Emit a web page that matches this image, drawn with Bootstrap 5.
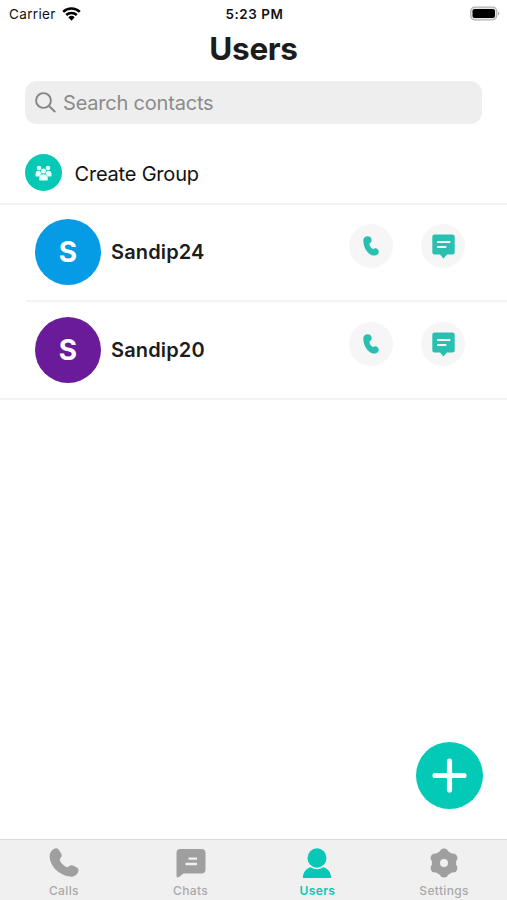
<!DOCTYPE html>
<html lang="en">
<head>
<meta charset="utf-8">
<meta name="viewport" content="width=device-width, initial-scale=1">
<title>Users</title>
<link href="https://cdn.jsdelivr.net/npm/bootstrap@5.3.0/dist/css/bootstrap.min.css" rel="stylesheet">
<style>
body{font-family:Inter,"Liberation Sans",sans-serif;color:#1c1c1c;background:#fff}
svg{display:block;flex:none}
.screen{height:900px;overflow:hidden}
.status{height:28px;font-size:13.5px;line-height:28px;color:#111;padding:0 7px 0 9px}
.carrier{letter-spacing:.35px}
.wifi{margin-left:6px}
.status .time{font-weight:600;font-size:13.4px;letter-spacing:.6px}
.title{height:53px;font-size:31.5px;line-height:42px;font-weight:700;letter-spacing:-.3px;margin:0;text-align:center}
.search{height:43px;margin:0 25px;border-radius:12px;background:#eee;color:#8b8b8b;font-size:20px;letter-spacing:-.2px;padding-left:10px}
.search span{margin-left:7px}
.create{height:81px;padding:18px 25px 0;border-bottom:2px solid #f3f3f3;font-size:20px;letter-spacing:-.2px;color:#111}
.create span{margin:2px 0 0 12.5px}
.group{width:37px;height:37px;background:#05c8b5}
.contact{height:96px;padding:0 42px 0 35px}
.rule{height:2px;background:#f3f3f3}
.rule.inset{margin-left:26px}
.rows{margin-top:-1px}
.avatar{width:66px;height:66px;font-size:28px;font-weight:700;color:#fff}
.blue{background:#069be5}.purple{background:#6a1b9a}
.who{font-size:20px;font-weight:600;letter-spacing:.15px;margin-left:10px}
.round{width:44px;height:44px;background:#f6f6f6;color:#29bfb1;border:0;padding:0;margin-bottom:12px}
.round + .round{margin-left:28px}
.fab{width:67px;height:67px;background:#03c9b7;border:0;padding:0;margin:0 24.5px 30px 0}
.tabs{height:61px;background:#f0f0f0;border-top:1px solid #dadada;color:#9f9f9f;font-size:12px;font-weight:500;letter-spacing:.35px;line-height:14px}
.tab{padding-top:8px;padding-left:1px}
.tab span{margin-top:6px;color:#a9a9a9}
.tab.on,.tab.on span{color:#07c8b7;font-weight:600}
</style>
</head>
<body>
<svg width="0" height="0" class="position-absolute">
<symbol id="phone" viewBox="0 0 30 30"><path d="M4.800 1C7-.3 8.800.3 9.900 2l2.200 3.400c1.100 1.800.8 3.400-.5 4.700-1.100 1.100-1.100 2.100-.2 3.500 1.300 2.100 2.900 3.700 5 5 1.400.9 2.400.8 3.500-.3 1.300-1.200 2.900-1.500 4.600-.6l3.300 1.900c2 1.300 2.200 3.200 1 5.100-1.800 3-4.700 4.400-8.200 3.900C9.600 27.300.9 17.800.6 8.600.5 5.300 2.300 2.400 4.800 1Z" fill="currentColor"/></symbol>
<symbol id="handset" viewBox="0 0 16 20"><path d="M2.300.8C4.800-.5 7.500.2 8.300 2.500c.7 2 .2 3.600-1.200 4.600-.7.500-.8 1.100-.5 2 .5 1.500 1.300 2.600 2.500 3.500.6.500 1.100.5 1.800.1 1.600-.9 3.300-.2 4.300 1.400 1.200 2 .3 3.900-1.700 4.900-2.200 1.100-5 .5-7.200-1.300C2.900 15.100.8 10.900.4 6.300.1 3.700.5 1.800 2.300.8Z" fill="currentColor"/></symbol>
<symbol id="note" viewBox="0 0 23 25"><path d="M2.500.5h18a2.200 2.200 0 0 1 2.200 2.200v15.600a2.200 2.200 0 0 1-2.200 2.200H15l-3.500 4-3.500-4H2.500a2.200 2.200 0 0 1-2.200-2.200V2.700A2.200 2.200 0 0 1 2.500.5Z" fill="currentColor"/><path d="M6 8h11.500M6 13h7.500" stroke="#f6f6f6" stroke-width="2.200" stroke-linecap="round"/></symbol>
</svg>
<main class="screen d-flex flex-column">
<div class="status d-flex align-items-center">
 <div class="col d-flex align-items-center"><span class="carrier">Carrier</span>
 <svg class="wifi" width="19" height="14" viewBox="0 0 19 14"><g fill="none" stroke="#000" stroke-width="2.500"><path d="M1.200 4.800a12 12 0 0 1 16.600 0"/><path d="M4.200 8a7.700 7.700 0 0 1 10.600 0"/></g><path d="M6.300 10.300a4.700 4.700 0 0 1 6.400 0L9.500 13.700Z"/></svg></div>
 <div class="time">5:23 PM</div>
 <div class="col d-flex justify-content-end"><svg width="31" height="16" viewBox="0 0 31 16"><rect x="1.700" y="1.200" width="26" height="12.600" rx="4" fill="#e8e8e8" stroke="#b2b2b2" stroke-width="1.200"/><rect x="3.500" y="3" width="22.500" height="9" rx="2" fill="#000"/><path d="M29 5.500c1.800.7 1.800 3.300 0 4Z" fill="#aaa"/></svg></div>
</div>
<h1 class="title">Users</h1>
<div class="search d-flex align-items-center">
 <svg width="21" height="21" viewBox="0 0 21 21" fill="none" stroke="#858585" stroke-width="1.900" stroke-linecap="round"><circle cx="8.500" cy="8.500" r="7.400"/><path d="m14 14 5.700 5.500"/></svg>
 <span>Search contacts</span>
</div>
<div class="create d-flex align-items-center">
 <div class="group rounded-circle d-flex align-items-center justify-content-center"><svg width="17" height="16" viewBox="0 0 17 16" fill="#e6fffc"><circle cx="4" cy="3" r="2.300"/><circle cx="13" cy="3" r="2.300"/><path d="M.5 10.500V9c0-2 1.300-3.200 3.100-3.200 1 0 1.600.4 2 1 .3 1.300.5 1.900 1.100 2.300-1.300.6-2 1.300-2.300 2.400H1.500c-.7 0-1-.3-1-1ZM16.500 10.500V9c0-2-1.300-3.200-3.100-3.200-1 0-1.600.4-2 1-.3 1.300-.5 1.900-1.100 2.300 1.300.6 2 1.300 2.300 2.400h2.900c.7 0 1-.3 1-1Z"/><circle cx="8.500" cy="6" r="2.500"/><path d="M4.200 14.500v-1.800c0-2.200 1.700-3.500 4.300-3.500s4.300 1.300 4.300 3.500v1.800c0 .6-.3 1-1 1H5.200c-.7 0-1-.4-1-1Z"/></svg></div>
 <span>Create Group</span>
</div>
<div class="rows">
<div class="contact d-flex align-items-center">
 <div class="avatar blue rounded-circle d-flex align-items-center justify-content-center">S</div>
 <span class="who flex-grow-1">Sandip24</span>
 <button class="round rounded-circle d-flex align-items-center justify-content-center" aria-label="Call"><svg width="16" height="20"><use href="#handset"/></svg></button>
 <button class="round rounded-circle d-flex align-items-center justify-content-center" aria-label="Chat"><svg width="23" height="25"><use href="#note"/></svg></button>
</div>
<div class="rule inset"></div>
<div class="contact d-flex align-items-center">
 <div class="avatar purple rounded-circle d-flex align-items-center justify-content-center">S</div>
 <span class="who flex-grow-1">Sandip20</span>
 <button class="round rounded-circle d-flex align-items-center justify-content-center" aria-label="Call"><svg width="16" height="20"><use href="#handset"/></svg></button>
 <button class="round rounded-circle d-flex align-items-center justify-content-center" aria-label="Chat"><svg width="23" height="25"><use href="#note"/></svg></button>
</div>
<div class="rule"></div>
</div>
<button class="fab rounded-circle mt-auto align-self-end d-flex align-items-center justify-content-center" aria-label="Add"><svg width="35" height="35" viewBox="0 0 35 35"><path d="M17.500 3v29M3 17.500h29" stroke="#fff" stroke-width="5.200" stroke-linecap="round"/></svg></button>
<nav class="tabs d-flex">
 <div class="tab col d-flex flex-column align-items-center"><svg width="30" height="30"><use href="#phone"/></svg><span>Calls</span></div>
 <div class="tab col d-flex flex-column align-items-center"><svg width="30" height="30" viewBox="0 0 30 30"><path d="M4.500 1h21A4 4 0 0 1 29.500 5v16.500a4 4 0 0 1-4 4H7.500L3 29C1.500 30 .5 29.300.5 27.800V5a4 4 0 0 1 4-4Z" fill="currentColor"/><path d="M12.500 10.700H21M9.500 16H21" stroke="#f0f0f0" stroke-width="2.300"/></svg><span>Chats</span></div>
 <div class="tab on col d-flex flex-column align-items-center"><svg width="30" height="30" viewBox="0 0 30 30" fill="currentColor"><ellipse cx="15" cy="10" rx="9.500" ry="9.700"/><path d="M.8 30C1 24.500 4 20.300 8.700 19.200c4 2.600 8.600 2.600 12.600 0C26 20.300 29 24.500 29.200 30Z"/></svg><span>Users</span></div>
 <div class="tab col d-flex flex-column align-items-center"><svg width="30" height="30" viewBox="0 0 30 30"><g fill="currentColor"><circle cx="15" cy="15" r="12.200"/><circle cx="15" cy="5" r="4.500"/><circle cx="23.900" cy="10" r="4.500"/><circle cx="23.900" cy="20" r="4.500"/><circle cx="15" cy="25" r="4.500"/><circle cx="6.100" cy="20" r="4.500"/><circle cx="6.100" cy="10" r="4.500"/></g><circle cx="15" cy="15" r="4" fill="#f0f0f0"/></svg><span>Settings</span></div>
</nav>
</main>
<script src="https://cdn.jsdelivr.net/npm/bootstrap@5.3.0/dist/js/bootstrap.bundle.min.js"></script>
</body>
</html>
